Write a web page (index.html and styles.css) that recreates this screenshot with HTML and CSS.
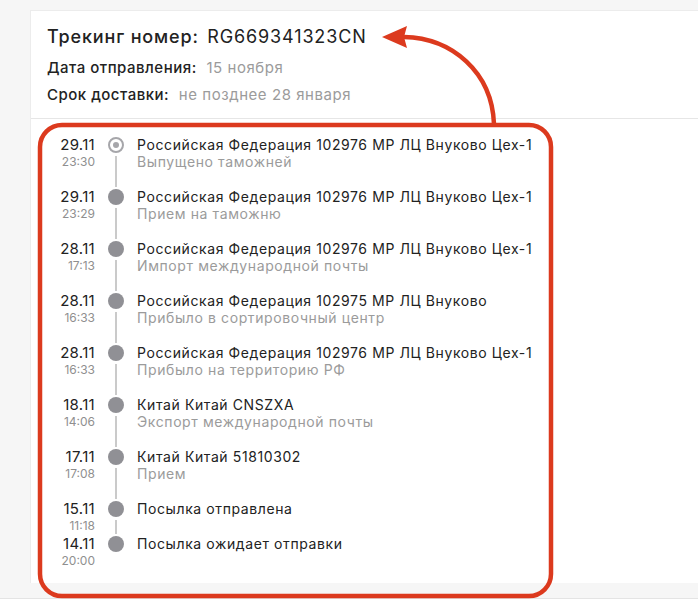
FILE: index.html
```html
<!DOCTYPE html>
<html lang="ru">
<head>
    <meta charset="UTF-8">
    <meta name="viewport" content="width=device-width, initial-scale=1.0">
    <title>Трекинг посылки</title>
    <link rel="stylesheet" href="styles.css">
</head>
<body>
    <div class="page">
        <div class="card">
            <div class="header">
                <h1>Трекинг номер: <span class="track">RG669341323CN</span></h1>
                <div class="info"><b>Дата отправления:</b> <span>15 ноября</span></div>
                <div class="info"><b>Срок доставки:</b> <span>не позднее 28 января</span></div>
            </div>

            <div class="events">
                <div class="event">
                    <div class="when"><div class="date">29.11</div><div class="time">23:30</div></div>
                    <div class="mark"><i class="dot current"></i><i class="line"></i></div>
                    <div class="what"><div class="place">Российская Федерация 102976 МР ЛЦ Внуково Цех-1</div><div class="status">Выпущено таможней</div></div>
                </div>
                <div class="event">
                    <div class="when"><div class="date">29.11</div><div class="time">23:29</div></div>
                    <div class="mark"><i class="dot"></i><i class="line"></i></div>
                    <div class="what"><div class="place">Российская Федерация 102976 МР ЛЦ Внуково Цех-1</div><div class="status">Прием на таможню</div></div>
                </div>
                <div class="event">
                    <div class="when"><div class="date">28.11</div><div class="time">17:13</div></div>
                    <div class="mark"><i class="dot"></i><i class="line"></i></div>
                    <div class="what"><div class="place">Российская Федерация 102976 МР ЛЦ Внуково Цех-1</div><div class="status">Импорт международной почты</div></div>
                </div>
                <div class="event">
                    <div class="when"><div class="date">28.11</div><div class="time">16:33</div></div>
                    <div class="mark"><i class="dot"></i><i class="line"></i></div>
                    <div class="what"><div class="place">Российская Федерация 102975 МР ЛЦ Внуково</div><div class="status">Прибыло в сортировочный центр</div></div>
                </div>
                <div class="event">
                    <div class="when"><div class="date">28.11</div><div class="time">16:33</div></div>
                    <div class="mark"><i class="dot"></i><i class="line"></i></div>
                    <div class="what"><div class="place">Российская Федерация 102976 МР ЛЦ Внуково Цех-1</div><div class="status">Прибыло на территорию РФ</div></div>
                </div>
                <div class="event">
                    <div class="when"><div class="date">18.11</div><div class="time">14:06</div></div>
                    <div class="mark"><i class="dot"></i><i class="line"></i></div>
                    <div class="what"><div class="place">Китай Китай CNSZXA</div><div class="status">Экспорт международной почты</div></div>
                </div>
                <div class="event">
                    <div class="when"><div class="date">17.11</div><div class="time">17:08</div></div>
                    <div class="mark"><i class="dot"></i><i class="line"></i></div>
                    <div class="what"><div class="place">Китай Китай 51810302</div><div class="status">Прием</div></div>
                </div>
                <div class="event">
                    <div class="when"><div class="date">15.11</div><div class="time">11:18</div></div>
                    <div class="mark"><i class="dot"></i><i class="line"></i></div>
                    <div class="what"><div class="place">Посылка отправлена</div></div>
                </div>
                <div class="event">
                    <div class="when"><div class="date">14.11</div><div class="time">20:00</div></div>
                    <div class="mark"><i class="dot"></i></div>
                    <div class="what"><div class="place">Посылка ожидает отправки</div></div>
                </div>
            </div>
        </div>
    </div>
    <div class="footer"></div>

    <!-- пометка поверх скриншота -->
    <svg class="note" width="698" height="604" viewBox="0 0 698 604">
        <rect x="40" y="125" width="511" height="471" rx="22" fill="none" stroke="#dc3a1e" stroke-width="4.5"/>
        <path d="M494 124 C492 72 452 38 404 37" fill="none" stroke="#dc3a1e" stroke-width="4.5"/>
        <path d="M382 37 L407 26 L404 37 L407 48 Z" fill="#dc3a1e"/>
    </svg>
</body>
</html>
```

FILE: styles.css
```css
body {
    margin: 0;
    position: relative;
    background: #fff;
    color: #222;
    font-family: Inter, "Noto Sans", sans-serif;
    font-size: 14px;
}
.page {
    background: #f6f6f6;
    padding: 10px 0 15px 30px;
}
.card {
    background: #fff;
    border-left: 1px solid #ececec;
    border-top: 1px solid #ececec;
}
.header {
    padding: 14px 16px 10px;
    border-bottom: 1px solid #e6e6e6;
}
h1 {
    margin: 0 0 5px;
    font-size: 18px;
    line-height: 24px;
    font-weight: 500;
    letter-spacing: 0.85px;
}
.track {
    font-weight: 400;
    margin-left: 3px;
}
.info {
    font-size: 15px;
    line-height: 27px;
    letter-spacing: 0.5px;
}
.info b {
    font-weight: 500;
}
.info span {
    color: #9b9b9b;
    margin-left: 5px;
    letter-spacing: 0.55px;
}
.events {
    padding: 17px 0 13px;
}
.event {
    display: flex;
}
.when {
    width: 64px;
    text-align: right;
}
.date {
    font-size: 15px;
    line-height: 17px;
    letter-spacing: 0.3px;
}
.time {
    font-size: 12px;
    line-height: 17px;
    color: #8f8f8f;
}
.mark {
    width: 16px;
    margin: 0 13px 0 13px;
    display: flex;
    flex-direction: column;
    align-items: center;
}
.dot {
    width: 16px;
    height: 16px;
    margin-top: 1px;
    border-radius: 50%;
    background: #909095;
    box-sizing: border-box;
}
.dot.current {
    background: #fff;
    border: 2px solid #a6a6aa;
    display: flex;
    align-items: center;
    justify-content: center;
}
.dot.current::after {
    content: "";
    width: 6px;
    height: 6px;
    border-radius: 50%;
    background: #a6a6aa;
}
.line {
    flex: 1;
    width: 2px;
    margin: 3px 0 1px;
    background: #cacaca;
}
.what {
    padding-bottom: 18px;
    letter-spacing: 0.6px;
}
.place {
    line-height: 17px;
}
.status {
    line-height: 17px;
    color: #9b9b9b;
}
.footer {
    border-top: 1px solid #e4e4e4;
    height: 6px;
}
.note {
    position: absolute;
    top: 0;
    left: 0;
    pointer-events: none;
}
```
